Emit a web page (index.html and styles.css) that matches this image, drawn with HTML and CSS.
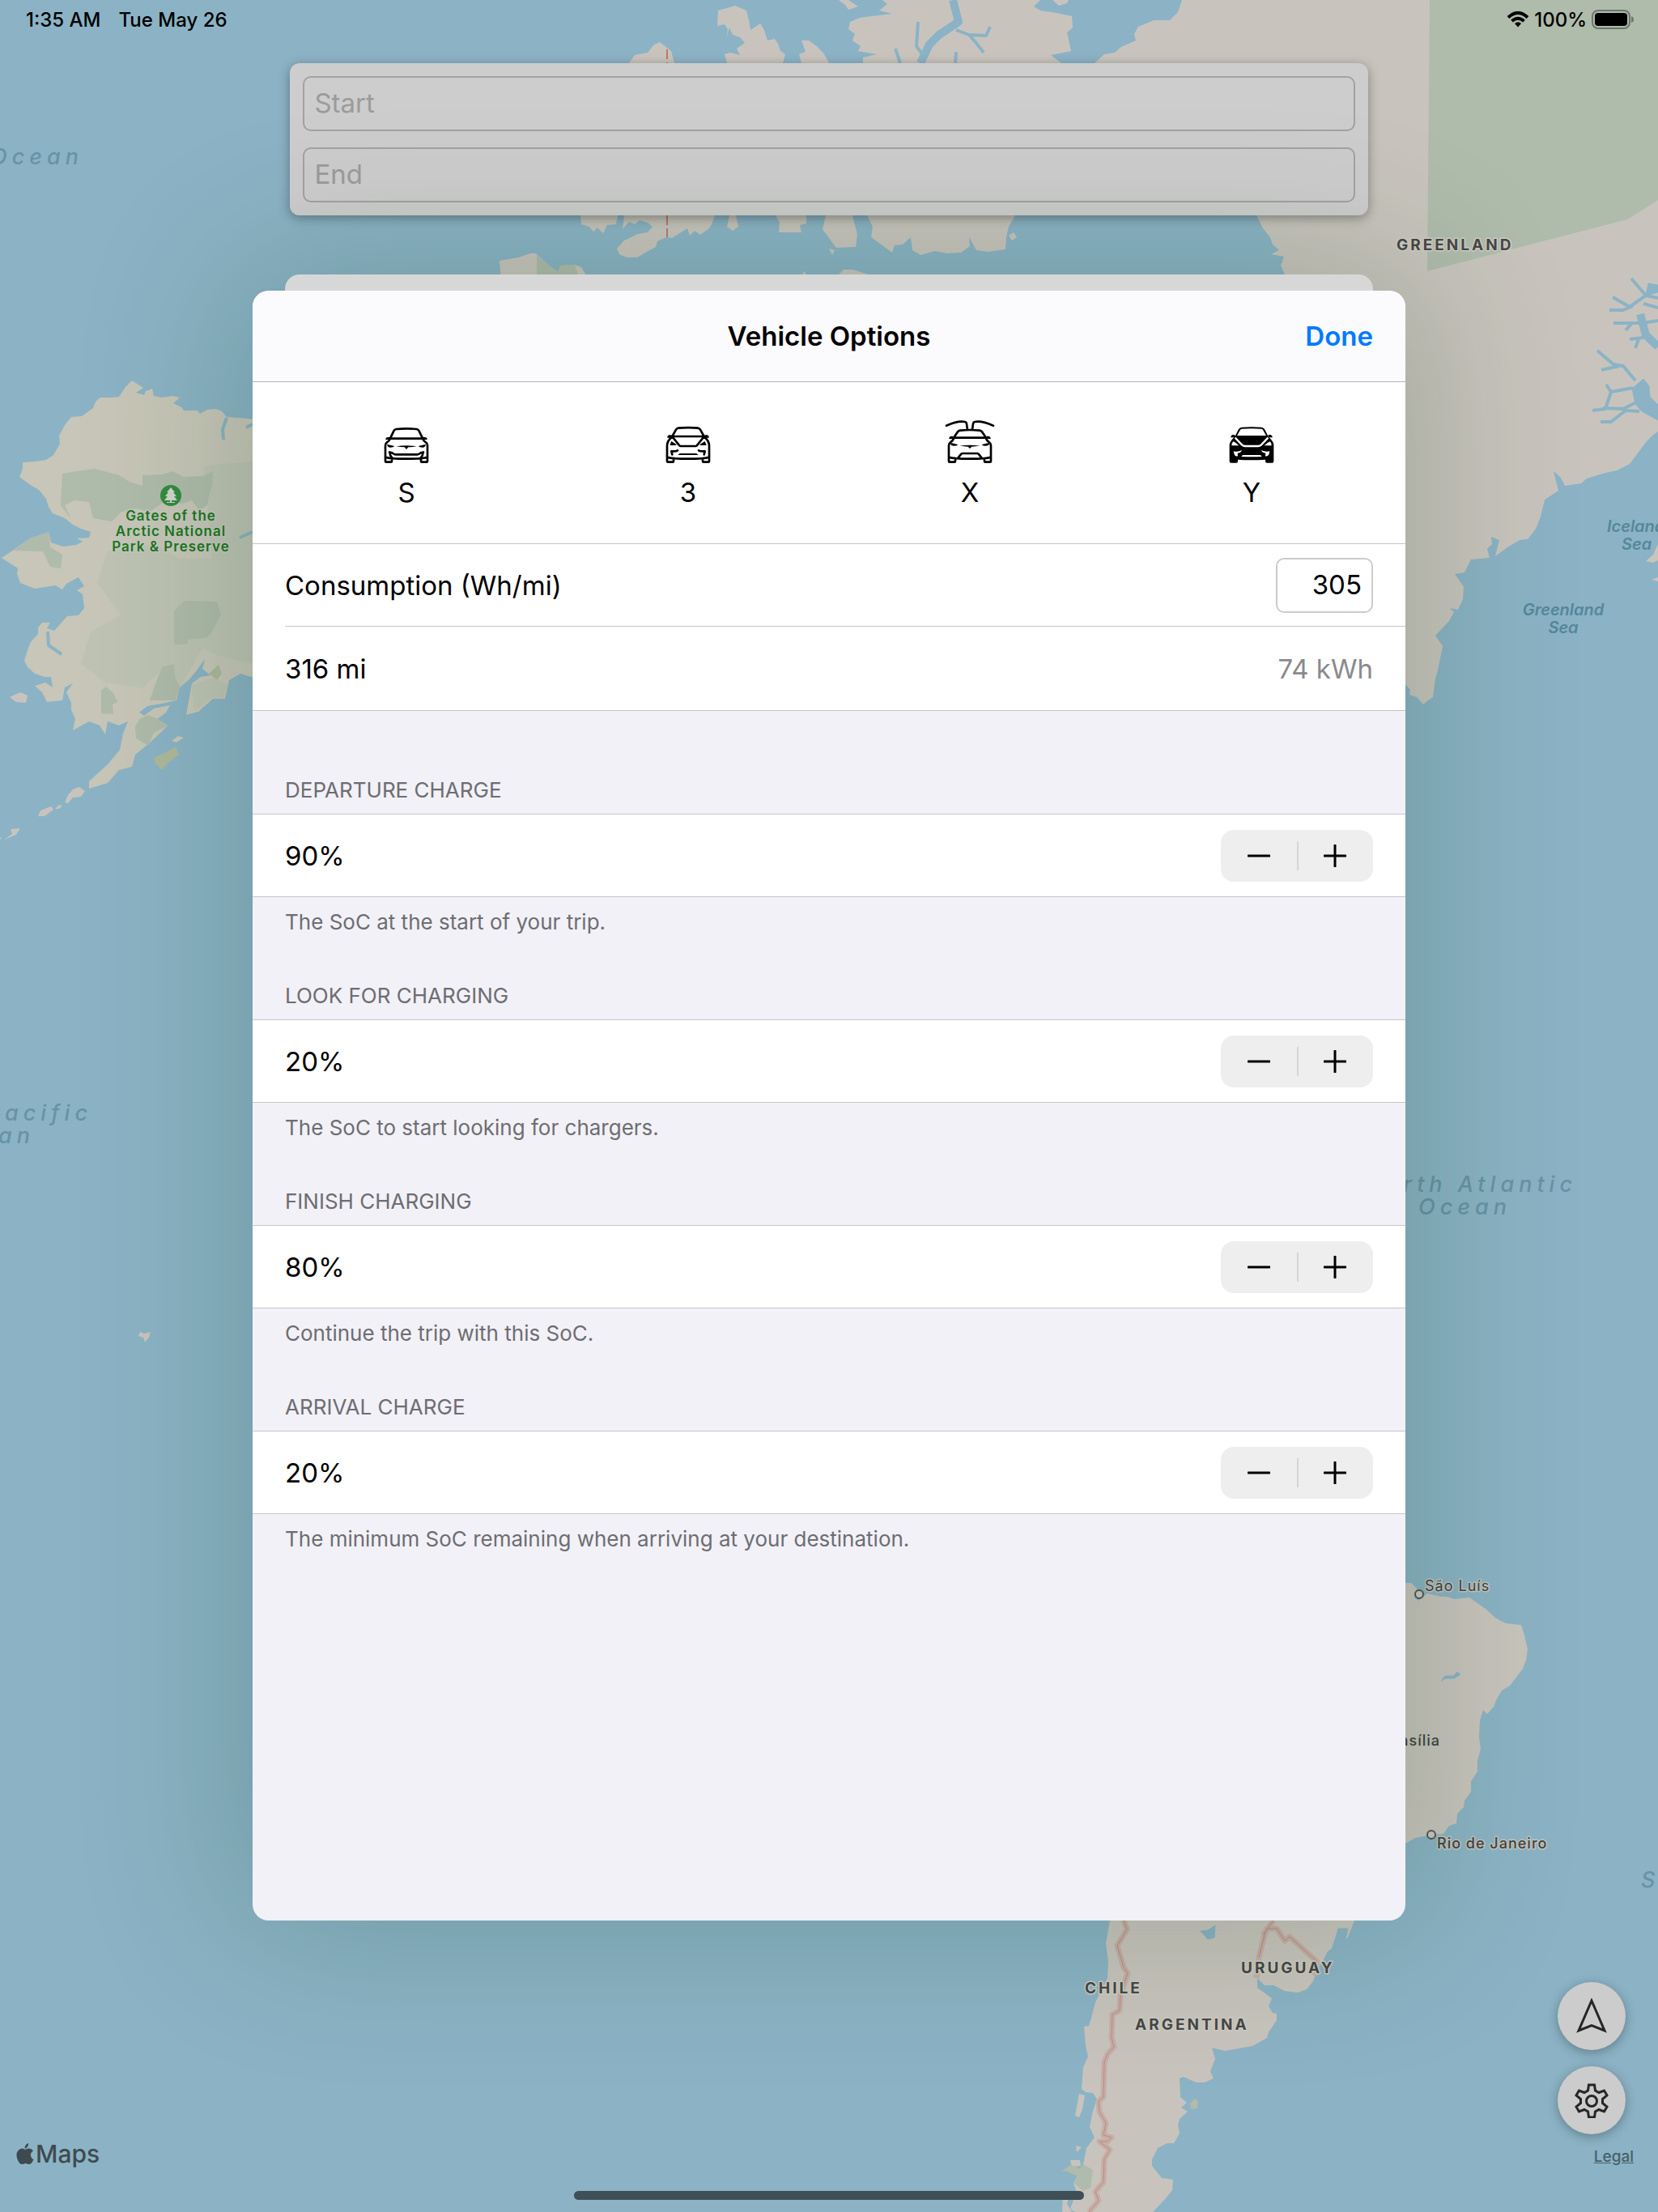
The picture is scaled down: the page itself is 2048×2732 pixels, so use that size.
FILE: index.html
```html
<!DOCTYPE html>
<html lang="en">
<head>
    <meta charset="UTF-8">
    <meta name="viewport" content="width=device-width, initial-scale=1.0">
    <title>Vehicle Options</title>
    <link rel="stylesheet" href="styles.css">
</head>
<body>

<!-- Map -->
<svg class="map" viewBox="0 0 2048 2732" preserveAspectRatio="xMidYMid slice" role="img" aria-label="Map">
    <g class="land">
        <!-- Alaska -->
        <path class="mainland" d="M330 519L293 516L280 515L274 508L267 505L256 506L247 511L244 507L227 507L224 503L214 498L222 491L213 489L200 491L190 489L188 480L180 483L178 488L168 485L177 479L163 470L155 478L147 490L138 491L124 491L118 496L115 504L101 514L88 515L80 525L73 538L74 548L70 555L66 562L57 568L43 570L28 571L28 579L24 589L36 598L48 605L57 616L60 626L65 634L80 640L90 648L100 653L112 657L110 664L95 665L102 669L94 673L78 675L63 670L60 657L37 665L17 679L2 689L22 702L21 709L25 720L43 727L68 723L77 728L82 721L97 713L104 724L95 729L102 734L104 751L97 760L83 761L76 769L67 779L58 776L62 769L52 769L47 775L47 783L38 793L35 800L30 816L34 824L43 832L55 836L63 836L65 849L56 843L43 847L52 855L58 867L77 865L80 849L90 844L82 855L88 868L88 877L93 888L90 902L110 891L123 896L130 907L133 891L147 896L158 891L152 906L148 926L133 944L110 965L110 974L133 967L147 951L163 947L167 932L182 920L195 908L207 896L193 889L205 880L210 871L190 875L178 884L172 880L182 872L200 869L218 865L222 849L233 840L243 828L253 814L250 826L260 834L248 836L237 844L230 883L245 879L263 863L278 863L283 840L297 832L330 842Z"/>
        <path d="M80 991L84 982L90 975L98 972L105 977L100 984L90 985L84 992ZM47 1008L50 1001L63 996L66 1000L55 1008ZM0 1034L2 1035L0 1037ZM5 1037L15 1030L13 1024L25 1023L20 1031ZM12 861L25 855L34 859L32 868L20 867ZM212 915L220 909L227 911L218 917ZM68 999L73 994L77 995L73 999Z"/>
        <path d="M171 1650L173 1645L178 1647L186 1645L184 1652L179 1658L177 1652Z"/>
        <!-- Canadian islands -->
        <path d="M777 78L784 68L800 65L808 55L815 52L820 56L829 63L833 78Z"/>
        <path d="M887 13L898 10L908 7L922 13L925 25L927 37L939 29L944 37L948 50L957 48L961 54L964 63L970 67L967 78L898 78L895 67L902 65L914 68L910 60L920 53L914 46L905 43L901 34L897 47L899 36L895 30L886 32Z"/>
        <path d="M990 50L999 50L1010 58L1018 67L1021 72L1024 78L990 78L987 67L995 64Z"/>
        <path d="M1090 0L1096 5L1086 13L1102 17L1076 20L1062 22L1050 27L1048 36L1056 42L1053 50L1063 57L1060 63L1083 67L1066 71L1066 78L1311 78L1298 68L1323 63L1318 40L1325 34L1324 20L1305 16L1285 13L1277 8L1285 0Z"/>
        <path d="M1036 0L1048 0L1060 8L1048 12L1044 6ZM1300 0L1320 0L1318 4L1308 7Z"/>
        <path d="M717 266L718 277L728 280L733 286L738 281L745 288L750 278L761 277L763 266ZM771 266L769 283L777 274L784 277L790 272L800 275L806 280L800 287L788 289L771 297L762 307L765 314L774 318L787 318L799 311L810 305L812 298L823 293L830 294L849 282L852 291L858 285L865 290L876 282L879 277L883 266ZM901 266L898 280L905 285L912 280L909 266ZM958 266L963 275L962 287L990 287L988 278L996 276L996 266ZM1020 266L1016 283L1024 294L1033 306L1057 305L1059 290L1053 266ZM1071 266L1078 280L1076 293L1090 303L1102 312L1105 303L1115 302L1125 293L1127 309L1137 315L1155 310L1170 313L1187 312L1198 304L1197 293L1206 309L1220 311L1242 308L1243 293L1246 280L1254 266ZM1246 291L1252 287L1256 293L1250 297Z"/>
        <path d="M1030 345L1042 333L1053 333L1073 339L1075 345ZM617 322L640 318L655 313L662 313L675 325L679 332L690 335L692 328L710 327L718 330L727 345L619 345ZM985 345L994 335L998 345ZM1024 307L1031 309L1028 315Z"/>
        <!-- Greenland -->
        <path d="M1460 0L1455 15L1445 25L1425 25L1406 33L1401 42L1403 50L1385 58L1377 65L1364 67L1352 78L1300 150L1480 230L1552 266L1560 282L1569 293L1572 302L1580 309L1570 314L1586 317L1582 328L1587 339L1640 600L1736 845L1742 852L1741 858L1750 861L1758 870L1764 865L1770 861L1773 838L1776 828L1782 798L1773 785L1790 767L1796 756L1791 751L1801 753L1807 740L1808 725L1797 709L1809 707L1817 691L1840 689L1837 678L1843 672L1842 663L1852 667L1847 687L1862 676L1877 667L1887 666L1897 653L1903 638L1908 617L1925 606L1919 582L1928 590L1933 600L1953 597L1960 591L1983 584L1997 581L2013 573L2022 561L2033 546L2042 537L2048 533L2048 0Z"/>
        <!-- Iceland -->
        <path d="M2048 672L2042 685L2033 693L2042 695L2048 692ZM2040 716L2048 713L2048 718Z"/>
        <!-- South America -->
        <path d="M1736 1955L1743 1955L1750 1962L1747 1973L1752 1977L1763 1968L1780 1972L1787 1972L1797 1975L1815 1973L1835 1987L1847 1998L1860 2005L1879 2007L1883 2020L1887 2037L1885 2050L1881 2061L1865 2082L1855 2088L1848 2100L1845 2108L1837 2117L1832 2112L1828 2125L1827 2145L1829 2160L1825 2175L1825 2188L1817 2200L1817 2213L1809 2224L1808 2232L1800 2240L1799 2252L1790 2255L1783 2265L1763 2267L1748 2270L1736 2277L1690 2350L1673 2372L1665 2393L1640 2410L1635 2420L1627 2433L1622 2447L1614 2457L1603 2461L1587 2459L1573 2452L1562 2452L1553 2443L1553 2455L1571 2468L1567 2478L1572 2486L1577 2487L1577 2495L1567 2510L1565 2517L1547 2527L1513 2533L1497 2529L1501 2543L1495 2558L1499 2567L1488 2572L1477 2572L1462 2565L1457 2567L1458 2590L1466 2597L1459 2603L1467 2608L1457 2617L1455 2625L1457 2635L1450 2647L1442 2647L1430 2653L1423 2667L1423 2675L1435 2690L1449 2692L1448 2705L1440 2715L1424 2732L1328 2732L1322 2728L1330 2707L1326 2697L1338 2673L1342 2653L1352 2640L1346 2627L1350 2607L1355 2593L1350 2585L1341 2584L1336 2580L1338 2553L1344 2540L1341 2527L1339 2503L1345 2502L1348 2492L1353 2473L1368 2443L1369 2423L1366 2400L1371 2372L1420 2000Z"/>
        <path d="M1333 2586L1340 2588L1337 2605L1333 2615L1328 2613ZM1322 2668L1334 2668L1335 2675L1324 2676ZM1329 2650L1336 2652L1330 2658ZM1313 2712L1322 2708L1318 2722L1324 2732L1312 2732Z"/>
    </g>
    <g class="tundra">
        <path d="M133 681L190 672L222 690L262 690L252 575L312 570L312 820L270 810L250 800L222 850L205 822L176 850L128 842L100 820L112 780L150 760L120 720Z"/>
        <path d="M237 846L262 838L281 845L276 862L262 862L240 878Z"/>
    </g>
    <g class="park">
        <path d="M77 585L95 582L117 579L147 587L160 595L176 600L176 587L200 586L213 582L227 589L250 588L263 582L262 600L258 612L256 624L246 630L237 618L225 622L205 618L185 632L167 628L150 632L138 644L115 640L110 620L92 618L80 624L87 640L75 624Z"/>
        <path d="M215 755L227 742L268 743L273 759L262 780L255 788L232 790L231 796L215 796ZM200 824L215 820L216 835L222 849L217 865L185 865L190 850ZM125 853L131 848L140 856L145 867L139 870L140 882L125 881ZM167 898L172 888L183 883L195 888L208 896L190 905L183 921L168 912ZM60 657L62 676L77 685L75 702L62 700L53 681L17 680L37 665Z"/>
        <path d="M190 936L205 929L217 922L221 932L208 942L200 951L192 943ZM258 832L270 821L274 832L268 840Z" class="park-warm"/>
        <path d="M1766 0L1763 335L2010 271L2048 247L2048 0Z"/>
        <path d="M663 315L684 332L690 335L692 328L710 327L716 345L663 345Z"/>
        <path d="M1311 2682L1322 2674L1334 2678L1338 2673L1350 2680L1347 2702L1338 2706L1327 2697L1331 2688L1316 2681ZM1470 2598L1475 2592L1480 2595L1479 2604L1471 2605Z"/>
    </g>
    <g class="fjord">
        <path d="M198 482L210 479L216 485L206 490L198 487Z"/>
        <path d="M2048 519L2028 508L2020 499L2016 480L2030 468L2037 477L2038 490L2048 500ZM2048 361L2033 365L2036 350L2048 352ZM1780 2076L1785 2070L1795 2070L1800 2065L1804 2068L1796 2073L1785 2073ZM1483 2385L1492 2384L1501 2378L1500 2393L1492 2395ZM1653 2382L1665 2382L1662 2395L1645 2407L1650 2393Z"/>
        <path class="wide" d="M1177 0L1184 27L1160 43L1148 55L1137 78M2026 388L2033 414L2048 428"/>
        <path class="narrow" d="M1181 37L1197 43L1218 44L1223 33M1197 43L1205 52L1215 65M1134 27L1132 57L1140 68M1106 60L1112 78M1180 78L1181 64M1973 433L1993 450L2005 452L2020 470M1978 457L2000 452M2017 479L1990 484L1983 505L1967 507M1984 475L1990 484M2025 495L2005 505L1980 504M2025 508L2008 507L1990 521L1977 521M2015 344L2033 365L2048 368M1992 367L2013 379L2033 365M1988 383L2005 383L2017 378M1993 399L2028 399L2048 396M2030 375L2048 380M2008 408L2015 400M2013 419L2030 417M2020 430L2024 419M280 516L275 530L276 543M312 524L304 528M59 780L60 797L76 808M312 657L296 664"/>
    </g>
    <g class="border-halo">
        <path d="M1388 2372L1392 2383L1380 2403L1388 2430L1393 2437L1384 2463L1383 2483L1374 2488L1373 2517L1376 2528L1368 2537L1364 2547L1363 2590L1357 2595L1358 2608L1366 2622L1363 2637L1373 2640L1368 2645L1358 2645L1371 2655L1364 2667L1363 2695L1353 2707L1357 2718L1345 2732"/>
        <path d="M1552 2443L1555 2417L1562 2390L1565 2382L1577 2382L1587 2397L1593 2392L1627 2423L1624 2440M1560 2390L1573 2372"/>
    </g>
    <g class="border-line">
        <path d="M1388 2372L1392 2383L1380 2403L1388 2430L1393 2437L1384 2463L1383 2483L1374 2488L1373 2517L1376 2528L1368 2537L1364 2547L1363 2590L1357 2595L1358 2608L1366 2622L1363 2637L1373 2640L1368 2645L1358 2645L1371 2655L1364 2667L1363 2695L1353 2707L1357 2718L1345 2732"/>
        <path d="M1555 2417L1562 2390L1565 2382L1577 2382L1587 2397L1593 2392L1627 2423M1560 2390L1573 2372"/>
    </g>
    <path class="state-line" d="M824 61V78M824 266V293"/>

    <circle cx="211" cy="612" r="13" class="park-pin"/>
    <path class="park-tree" d="M211 602L216 608H214L218 613H215L219 618H212V620H216V621H206V620H210V618H203L207 613H204L208 608H206Z"/>
    <g class="label-park" text-anchor="middle">
        <text x="211" y="643">Gates of the</text>
        <text x="211" y="662">Arctic National</text>
        <text x="211" y="681">Park &amp; Preserve</text>
    </g>
    <g class="label-ocean">
        <text x="103" y="203" text-anchor="end">Ocean</text>
        <text x="114" y="1384" text-anchor="end">Pacific</text>
        <text x="43" y="1412" text-anchor="end">Ocean</text>
        <text x="1948" y="1472" text-anchor="end">North Atlantic</text>
        <text x="1752" y="1500">Ocean</text>
        <text x="2027" y="2331">South</text>
    </g>
    <g class="label-sea">
        <text x="1985" y="657">Iceland</text>
        <text x="2003" y="679">Sea</text>
        <text x="1931" y="760" text-anchor="middle">Greenland</text>
        <text x="1931" y="782" text-anchor="middle">Sea</text>
    </g>
    <g class="label-country">
        <text x="1725" y="309">GREENLAND</text>
        <text x="1340" y="2462">CHILE</text>
        <text x="1402" y="2507">ARGENTINA</text>
        <text x="1533" y="2437">URUGUAY</text>
    </g>
    <g class="label-city">
        <circle cx="1753" cy="1969" r="5"/>
        <circle cx="1768" cy="2266" r="5"/>
        <text class="minor" x="1760" y="1965">São Luís</text>
        <text x="1779" y="2156" text-anchor="end">Brasília</text>
        <text x="1775" y="2283">Rio de Janeiro</text>
    </g>
</svg>

<div class="screen">
    <header class="status-bar">
        <span>1:35 AM</span>
        <span>Tue May 26</span>
        <span class="status-right">
            <svg class="wifi" viewBox="0 0 28 20" aria-hidden="true">
                <path d="M2 7.5Q14 -3.5 26 7.5" />
                <path d="M6.5 12Q14 5.500 21.500 12" />
                <path class="dot" d="M14 19.500L10 15Q14 11.500 18 15Z" />
            </svg>
            <span>100%</span>
            <svg class="battery" viewBox="0 0 52 24" aria-hidden="true">
                <rect class="shell" x="1" y="1" width="46" height="22" rx="7"/>
                <rect x="4" y="4" width="40" height="16" rx="4"/>
                <path class="nub" d="M49 8Q52 9 52 12Q52 15 49 16Z"/>
            </svg>
        </span>
    </header>

    <form class="search">
        <input type="text" aria-label="Start" placeholder="Start">
        <input type="text" aria-label="End" placeholder="End">
    </form>

    <div class="sheet-behind"></div>

    <main class="sheet">
        <div class="sheet-header">
            <h1>Vehicle Options</h1>
            <button type="button" class="done">Done</button>
        </div>

        <div class="models">
            <button type="button" class="model">
                <svg viewBox="-96 0 192 180" aria-hidden="true">
                    <path class="line" d="M-60 76L-47 49Q-44 43 -38 42Q0 38 38 42Q44 43 47 49L60 76M-62 77H62M-60 77Q-64 86 -72 91Q-78 95 -78 102V161Q-78 164 -75 164H-57Q-54 164 -54 161V150M60 77Q64 86 72 91Q78 95 78 102V161Q78 164 75 164H57Q54 164 54 161V150M-77 146Q-60 152 0 152Q60 152 77 146"/>
                    <path class="line" d="M-62 128Q-61 140 -54 147M62 128Q61 140 54 147M-63 128Q-52 129 -47 134Q-45 136 -40 136H40Q45 136 47 134Q52 129 63 128"/>
                    <path d="M-62 72V81H-77Q-78 73 -70 72ZM62 72V81H77Q78 73 70 72ZM-72 98L-44 105Q-48 110 -60 110Q-70 110 -72 98ZM72 98L44 105Q48 110 60 110Q70 110 72 98ZM-38 106Q0 100 38 106Q20 109 7 109L0 117L-7 109Q-20 109 -38 106Z"/>
                </svg>
                <span>S</span>
            </button>
            <button type="button" class="model">
                <svg viewBox="-96 0 192 180" aria-hidden="true">
                    <path class="line" d="M-59 69L-45 44Q-42 39 -36 38Q0 35 36 38Q42 39 45 44L59 69M-62 69H62M-59 71Q-77 84 -78 102V161Q-78 164 -75 164H-57Q-54 164 -54 161V150M59 71Q77 84 78 102V161Q78 164 75 164H57Q54 164 54 161V150M-77 146Q-60 152 0 152Q60 152 77 146M-57 72L-34 101Q-32 105 -28 105H28Q32 105 34 101L57 72"/>
                    <path class="line" d="M-59 136L-62 124Q-45 125 -39 121M59 136L62 124Q45 125 39 121"/>
                    <path d="M-62 64V74H-77Q-78 66 -70 64ZM62 64V74H77Q78 66 70 64ZM-62 87L-42 100Q-44 103 -68 101ZM62 87L42 100Q44 103 68 101ZM-38 138L-31 132H31L38 138Z"/>
                </svg>
                <span>3</span>
            </button>
            <button type="button" class="model">
                <svg viewBox="-96 0 192 180" aria-hidden="true">
                    <path class="line" d="M-87 29Q-44 10 -18 15Q-13 16 -12 22L-9 44M87 29Q44 10 18 15Q13 16 12 22L9 44M-59 73L-46 53Q-42 48 -36 47Q0 43 36 47Q42 48 46 53L59 73M-62 74H62M-59 75Q-62 84 -72 91Q-78 95 -78 102V161Q-78 164 -75 164H-57Q-54 164 -54 161V150M59 75Q62 84 72 91Q78 95 78 102V161Q78 164 75 164H57Q54 164 54 161V150M-77 146Q-60 152 0 152Q60 152 77 146M-44 149L-32 134Q-30 132 -27 132H27Q30 132 32 134L44 149"/>
                    <path d="M-62 68V78H-77Q-78 70 -70 68ZM62 68V78H77Q78 70 70 68ZM-73 93Q-50 96 -44 101Q-58 107 -70 101ZM73 93Q50 96 44 101Q58 107 70 101ZM-38 104Q0 98 38 104Q20 106 7 107L0 114L-7 107Q-20 106 -38 104Z"/>
                </svg>
                <span>X</span>
            </button>
            <button type="button" class="model">
                <svg viewBox="-96 0 192 180" aria-hidden="true">
                    <path d="M-62 70L-48 42Q-44 36 -36 35Q0 32 36 35Q44 36 48 42L62 70Q82 88 82 102V161Q82 167 76 167H57Q51 167 51 161V155Q0 159 -51 155V161Q-51 167 -57 167H-76Q-82 167 -82 161V102Q-82 88 -62 70ZM-62 63V73H-77Q-78 65 -70 63ZM62 63V73H77Q78 65 70 63Z"/>
                    <path class="cut" d="M-54 66L-42 45Q-40 41 -36 41Q0 38 36 41Q40 41 42 45L54 66ZM-74 103Q-74 92 -68 88Q-58 92 -47 103ZM74 103Q74 92 68 88Q58 92 47 103ZM-67 124Q-50 127 -36 120Q-38 129 -52 131L-51 142Q-64 146 -67 124ZM67 124Q50 127 36 120Q38 129 52 131L51 142Q64 146 67 124ZM-38 144L-33 138H33L38 144Q0 146 -38 144Z"/>
                    <path class="cut-line" d="M-61 74L-36 100Q-30 105 -24 105H24Q30 105 36 100L61 74"/>
                </svg>
                <span>Y</span>
            </button>
        </div>

        <div class="row inset">
            <label for="consumption">Consumption (Wh/mi)</label>
            <input id="consumption" class="number" type="text" inputmode="numeric" value="305">
        </div>
        <div class="row last">
            <span>316 mi</span>
            <span class="muted">74 kWh</span>
        </div>

        <section class="group">
            <h2>DEPARTURE CHARGE</h2>
            <div class="row boxed">
                <span>90%</span>
                <div class="stepper">
                    <button type="button" aria-label="Decrease departure charge"><svg viewBox="0 0 28 28" aria-hidden="true"><path d="M1 14H27"/></svg></button>
                    <button type="button" aria-label="Increase departure charge"><svg viewBox="0 0 28 28" aria-hidden="true"><path d="M1 14H27M14 1V27"/></svg></button>
                </div>
            </div>
            <p>The SoC at the start of your trip.</p>
        </section>

        <section class="group">
            <h2>LOOK FOR CHARGING</h2>
            <div class="row boxed">
                <span>20%</span>
                <div class="stepper">
                    <button type="button" aria-label="Decrease look for charging"><svg viewBox="0 0 28 28" aria-hidden="true"><path d="M1 14H27"/></svg></button>
                    <button type="button" aria-label="Increase look for charging"><svg viewBox="0 0 28 28" aria-hidden="true"><path d="M1 14H27M14 1V27"/></svg></button>
                </div>
            </div>
            <p>The SoC to start looking for chargers.</p>
        </section>

        <section class="group">
            <h2>FINISH CHARGING</h2>
            <div class="row boxed">
                <span>80%</span>
                <div class="stepper">
                    <button type="button" aria-label="Decrease finish charging"><svg viewBox="0 0 28 28" aria-hidden="true"><path d="M1 14H27"/></svg></button>
                    <button type="button" aria-label="Increase finish charging"><svg viewBox="0 0 28 28" aria-hidden="true"><path d="M1 14H27M14 1V27"/></svg></button>
                </div>
            </div>
            <p>Continue the trip with this SoC.</p>
        </section>

        <section class="group">
            <h2>ARRIVAL CHARGE</h2>
            <div class="row boxed">
                <span>20%</span>
                <div class="stepper">
                    <button type="button" aria-label="Decrease arrival charge"><svg viewBox="0 0 28 28" aria-hidden="true"><path d="M1 14H27"/></svg></button>
                    <button type="button" aria-label="Increase arrival charge"><svg viewBox="0 0 28 28" aria-hidden="true"><path d="M1 14H27M14 1V27"/></svg></button>
                </div>
            </div>
            <p>The minimum SoC remaining when arriving at your destination.</p>
        </section>
    </main>

    <footer class="map-footer">
        <div class="brand">
            <svg viewBox="0 0 22 26" aria-hidden="true">
                <path d="M15 0Q15.500 3 13.500 5Q12 6.500 10.500 6.500Q10.500 3.500 12 2Q13.500 .5 15 0ZM11 8Q13 6.500 15.500 6.500Q19 6.500 21 9.500Q17.500 11.500 18 15.500Q18.500 19 21.500 20Q19 26 16 26Q14.500 26 13.500 25.500Q11.500 24.500 9.500 25.500Q8 26 7 26Q4 26 1.500 20Q-1 13 2.500 9Q4.500 6.500 7.500 6.500Q9 6.500 11 8Z"/>
            </svg>
            <span>Maps</span>
        </div>
        <div class="home-indicator"></div>
        <div class="controls">
            <button type="button" class="round" aria-label="Current location">
                <svg viewBox="0 0 44 44" aria-hidden="true"><path d="M22 3L38 40L22 33.500L6 40Z"/></svg>
            </button>
            <button type="button" class="round" aria-label="Settings">
                <svg viewBox="0 0 44 44" aria-hidden="true">
                    <path d="M18.500 3H25.500L26.500 10L31 12.500L37.500 10L41 16L35.500 20.500V25.500L41 30L37.500 36L31 33.500L26.500 36L25.500 43H18.500L17.500 36L13 33.500L6.500 36L3 30L8.500 25.500V20.500L3 16L6.500 10L13 12.500L17.500 10Z"/>
                    <circle cx="22" cy="23" r="6.500"/>
                </svg>
            </button>
            <a href="#" class="legal">Legal</a>
        </div>
    </footer>
</div>

</body>
</html>
```
FILE: styles.css
```css
* {
    box-sizing: border-box;
}

body {
    margin: 0;
    position: relative;
    min-height: 100vh;
    background-color: #8bb3c5;
    font-family: Inter, "Liberation Sans", sans-serif;
    font-size: 33px;
    color: #000;
}

button, input {
    font: inherit;
    color: inherit;
}

button {
    padding: 0;
    border: none;
    background: none;
}

h1, h2, p {
    margin: 0;
}

/* map */
.map {
    position: absolute;
    top: 0;
    left: 0;
    width: 100%;
    height: 100%;
}

.land {
    fill: #c8c4bd;
}

.land .mainland {
    fill: #c7c6b8;
}

.tundra {
    fill: #bec3b4;
}

.park {
    fill: #afbbab;
}

.park-warm {
    fill: #adb99b;
}

.fjord {
    fill: #8bb3c5;
    stroke: #8bb3c5;
    stroke-linejoin: round;
}

.fjord .wide {
    fill: none;
    stroke-width: 10;
}

.fjord .narrow {
    fill: none;
    stroke-width: 4;
}

.border-halo {
    fill: none;
    stroke: #c8aea6;
    stroke-width: 7;
    stroke-linejoin: round;
}

.border-line {
    fill: none;
    stroke: #b08f87;
    stroke-width: 1;
}

.state-line {
    stroke: #c0786c;
    stroke-width: 2;
    stroke-dasharray: 12 4;
}

.park-pin {
    fill: #348c40;
}

.park-tree {
    fill: #d0d6cd;
}

.map text {
    paint-order: stroke;
    stroke-linejoin: round;
}

.label-park {
    fill: #1d761d;
    stroke: #c5c8bf;
    stroke-width: 3;
    font-size: 17px;
    font-weight: 600;
    letter-spacing: 1px;
}

.label-ocean {
    fill: #6893a6;
    font-size: 27px;
    font-style: italic;
    font-weight: 500;
    letter-spacing: 6px;
}

.label-sea {
    fill: #56879b;
    font-size: 20px;
    font-style: italic;
    font-weight: 600;
}

.label-country {
    fill: #474745;
    stroke: #d0cdc8;
    stroke-width: 3;
    font-size: 19px;
    font-weight: 700;
    letter-spacing: 3px;
}

.label-city {
    fill: #41423e;
    stroke: #c4c4be;
    stroke-width: 3;
    font-size: 18px;
    font-weight: 500;
    letter-spacing: 1px;
}

.label-city .minor {
    font-weight: 400;
}

.label-city circle {
    fill: #c8c8c4;
    stroke: #55564f;
    stroke-width: 2;
}

/* page column */
.screen {
    position: relative;
    display: flex;
    flex-direction: column;
    align-items: center;
    min-height: 100vh;
}

.status-bar {
    display: flex;
    align-items: center;
    gap: 22px;
    width: 100%;
    height: 48px;
    padding: 0 30px 0 32px;
    font-size: 24px;
    font-weight: 500;
}

.status-right {
    display: flex;
    align-items: center;
    gap: 6px;
    margin-left: auto;
}

.wifi {
    width: 28px;
    height: 20px;
    fill: none;
    stroke: #000;
    stroke-width: 4;
}

.wifi .dot {
    fill: #000;
    stroke: none;
}

.battery {
    width: 52px;
    height: 24px;
}

.battery .shell {
    fill: none;
    stroke: #6b776a;
    stroke-width: 2;
}

.battery .nub {
    fill: #6b776a;
}

.search {
    display: flex;
    flex-direction: column;
    gap: 20px;
    width: 65%;
    margin-top: 30px;
    padding: 16px;
    border-radius: 12px;
    background-color: #cdcdcd;
    box-shadow: 0 3px 14px rgba(0, 0, 0, 0.35);
}

.search input {
    width: 100%;
    height: 68px;
    padding: 0 12px 2px;
    border: 2px solid #a2a2a2;
    border-radius: 10px;
    background: none;
}

.search input::placeholder {
    color: #9b9b9c;
    opacity: 1;
}

.sheet-behind {
    position: relative;
    z-index: 1;
    width: 1344px;
    max-width: 95%;
    height: 20px;
    margin-top: 73px;
    border-radius: 18px 18px 0 0;
    background-color: #d8d7d8;
}

.sheet {
    flex: 1;
    width: 1424px;
    max-width: 100%;
    overflow: hidden;
    border-radius: 20px;
    background-color: #f2f1f7;
    box-shadow: 0 -10px 200px 20px rgba(0, 50, 15, 0.2);
}

.sheet-header {
    display: grid;
    grid-template-columns: 1fr auto 1fr;
    align-items: center;
    height: 113px;
    padding: 0 40px;
    border-bottom: 1px solid #b3b3b6;
    background-color: #fbfafd;
}

.sheet-header h1 {
    grid-column: 2;
    font-size: 33px;
    font-weight: 600;
}

.done {
    justify-self: end;
    color: #007aff;
    font-weight: 600;
}

.models {
    display: grid;
    grid-template-columns: repeat(4, 1fr);
    height: 200px;
    padding: 0 16px;
    border-bottom: 1px solid #c6c6c8;
    background-color: #fff;
}

.model {
    display: flex;
    flex-direction: column;
    align-items: center;
    justify-content: center;
    gap: 12px;
    line-height: 40px;
}

.model svg {
    width: 64px;
    height: 60px;
}

.model .line {
    fill: none;
    stroke: #000;
    stroke-width: 8;
    stroke-linejoin: round;
    stroke-linecap: round;
}

.model .cut {
    fill: #fff;
}

.model .cut-line {
    fill: none;
    stroke: #fff;
    stroke-width: 7;
}

.row {
    display: flex;
    align-items: center;
    justify-content: space-between;
    height: 103px;
    padding: 0 40px;
    background-color: #fff;
}

/* separator starts at the text, not at the edge */
.inset {
    height: 102px;
    background-image: linear-gradient(#c6c6c8, #c6c6c8);
    background-repeat: no-repeat;
    background-size: 100% 1px;
    background-position: 40px bottom;
}

.last {
    height: 104px;
    border-bottom: 1px solid #c6c6c8;
}

.boxed {
    border-top: 1px solid #c6c6c8;
    border-bottom: 1px solid #c6c6c8;
}

.muted {
    color: #8a8a8e;
}

.number {
    width: 120px;
    height: 68px;
    padding: 0 12px 2px;
    border: 2px solid #cccccd;
    border-radius: 10px;
    background-color: #fff;
    text-align: right;
}

.group h2, .group p {
    padding: 0 40px;
    font-size: 26px;
    font-weight: 400;
    line-height: 32px;
    color: #6d6d72;
}

.group h2 {
    padding-top: 59px;
    padding-bottom: 13px;
}

.last + .group h2 {
    padding-top: 82px;
}

.group p {
    padding-top: 15px;
}

.stepper {
    display: flex;
    width: 188px;
    height: 64px;
    border-radius: 16px;
    background-color: #eeeeee;
}

.stepper button {
    flex: 1;
    display: flex;
    align-items: center;
    justify-content: center;
}

.stepper button:last-child {
    background: linear-gradient(#d5d5d6, #d5d5d6) no-repeat left center / 2px 36px;
}

.stepper svg {
    width: 28px;
    height: 28px;
    fill: none;
    stroke: #000;
    stroke-width: 3;
    stroke-linecap: round;
}

/* bottom of the map */
.map-footer {
    display: grid;
    grid-template-columns: 1fr auto 1fr;
    align-items: end;
    width: 100%;
    height: 360px;
    padding: 0 20px;
}

.brand {
    display: flex;
    align-items: center;
    gap: 2px;
    padding-bottom: 54px;
    font-size: 30px;
    font-weight: 500;
    line-height: 36px;
    color: #3f4a50;
}

.brand svg {
    width: 22px;
    height: 26px;
    fill: #3f4a50;
}

.home-indicator {
    width: 630px;
    height: 11px;
    margin-bottom: 15px;
    border-radius: 6px;
    background-color: #3f4f57;
}

.controls {
    display: flex;
    flex-direction: column;
    align-items: flex-end;
    gap: 20px;
    padding-right: 10px;
    padding-bottom: 60px;
}

.round {
    display: flex;
    align-items: center;
    justify-content: center;
    width: 84px;
    height: 84px;
    margin-right: 10px;
    border-radius: 50%;
    background-color: #cccccc;
    box-shadow: 0 3px 14px rgba(0, 0, 0, 0.3);
}

.round svg {
    width: 44px;
    height: 44px;
    fill: none;
    stroke: #262626;
    stroke-width: 3;
}

.legal {
    font-size: 19px;
    font-weight: 500;
    line-height: 16px;
    color: #47606b;
}
```
